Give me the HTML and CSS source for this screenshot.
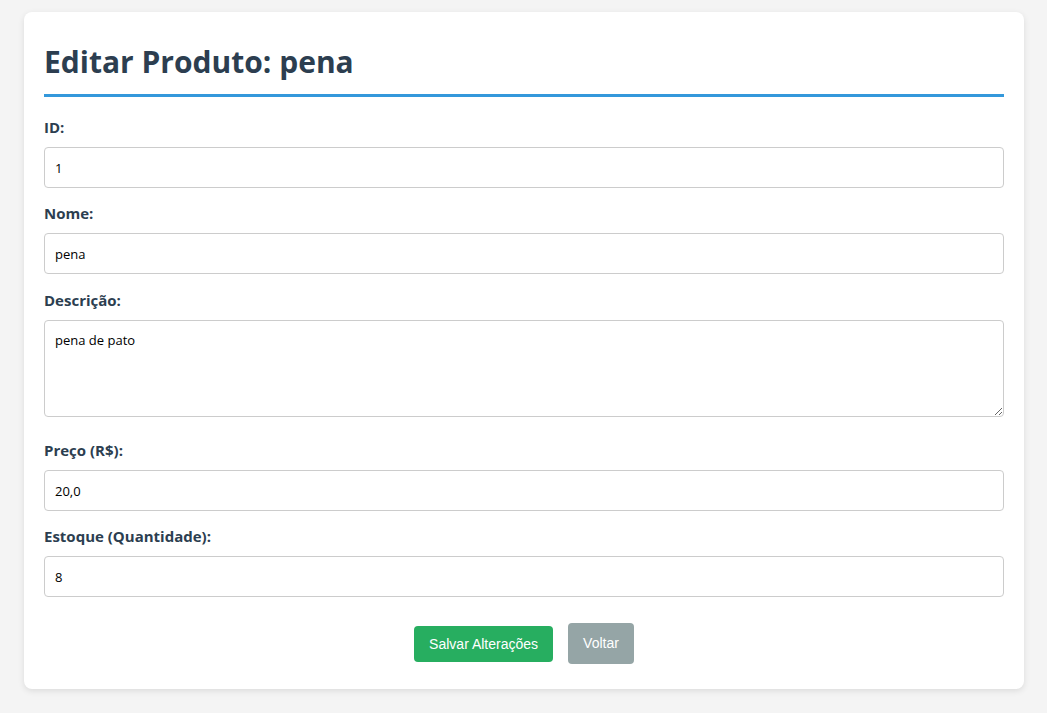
FILE: index.html
```html
<!DOCTYPE html>
<html lang="pt-BR">
<head>
<meta charset="utf-8">
<title>Editar Produto</title>
<link rel="stylesheet" href="styles.css">
</head>
<body>
<div class="card">
  <h1 class="title">Editar Produto: pena</h1>
  <form class="form">
    <div class="group">
      <label class="label">ID:</label>
      <input class="field" type="text" value="1">
    </div>
    <div class="group group-name">
      <label class="label">Nome:</label>
      <input class="field" type="text" value="pena">
    </div>
    <div class="group group-text">
      <label class="label">Descrição:</label>
      <textarea class="field area">pena de pato</textarea>
    </div>
    <div class="group">
      <label class="label">Preço (R$):</label>
      <input class="field" type="text" value="20,0">
    </div>
    <div class="group">
      <label class="label">Estoque (Quantidade):</label>
      <input class="field" type="text" value="8">
    </div>
    <div class="actions">
      <button class="btn btn-save" type="button">Salvar Alterações</button>
      <a class="btn btn-back" href="#">Voltar</a>
    </div>
  </form>
</div>
</body>
</html>
```

FILE: styles.css
```css
html, body {
  margin: 0;
  padding: 0;
}
body {
  background: #f4f4f4;
  font-family: "Open Sans", "Noto Sans", sans-serif;
  padding: 12px 23px 24px 24px;
}
.card {
  background: #fff;
  border-radius: 8px;
  box-shadow: 0 2px 6px rgba(0, 0, 0, 0.1);
  padding: 20px 20px 25px;
}
.title {
  margin: 0 0 20px;
  padding: 10px 0 12px;
  font-size: 30px;
  line-height: 40px;
  font-weight: 700;
  color: #2c3e50;
  border-bottom: 3px solid #3498db;
}
.group {
  margin-bottom: 15px;
}
.group-name {
  margin-bottom: 16px;
}
.group-text {
  margin-bottom: 23px;
}
.label {
  display: block;
  font-size: 15px;
  line-height: 21px;
  font-weight: 700;
  color: #2c3e50;
  margin-bottom: 9px;
}
.field {
  display: block;
  box-sizing: border-box;
  width: 100%;
  height: 41px;
  margin: 0;
  padding: 10px;
  border: 1px solid #ccc;
  border-radius: 4px;
  font-family: "Open Sans", "Noto Sans", sans-serif;
  font-size: 13px;
  line-height: 19px;
  color: #000;
  background: #fff;
}
.area {
  height: 97px;
  resize: vertical;
}
.actions {
  display: flex;
  justify-content: center;
  align-items: center;
  gap: 15px;
  margin-top: 26px;
}
.btn {
  font-family: "Liberation Sans", Arial, sans-serif;
  font-size: 14px;
  color: #fff;
  border: none;
  border-radius: 4px;
  text-decoration: none;
  display: inline-block;
}
.btn-save {
  background: #27ae60;
  padding: 10px 15px;
  line-height: 16px;
}
.btn-back {
  background: #95a5a6;
  padding: 12px 15px;
  line-height: 17px;
}
```
